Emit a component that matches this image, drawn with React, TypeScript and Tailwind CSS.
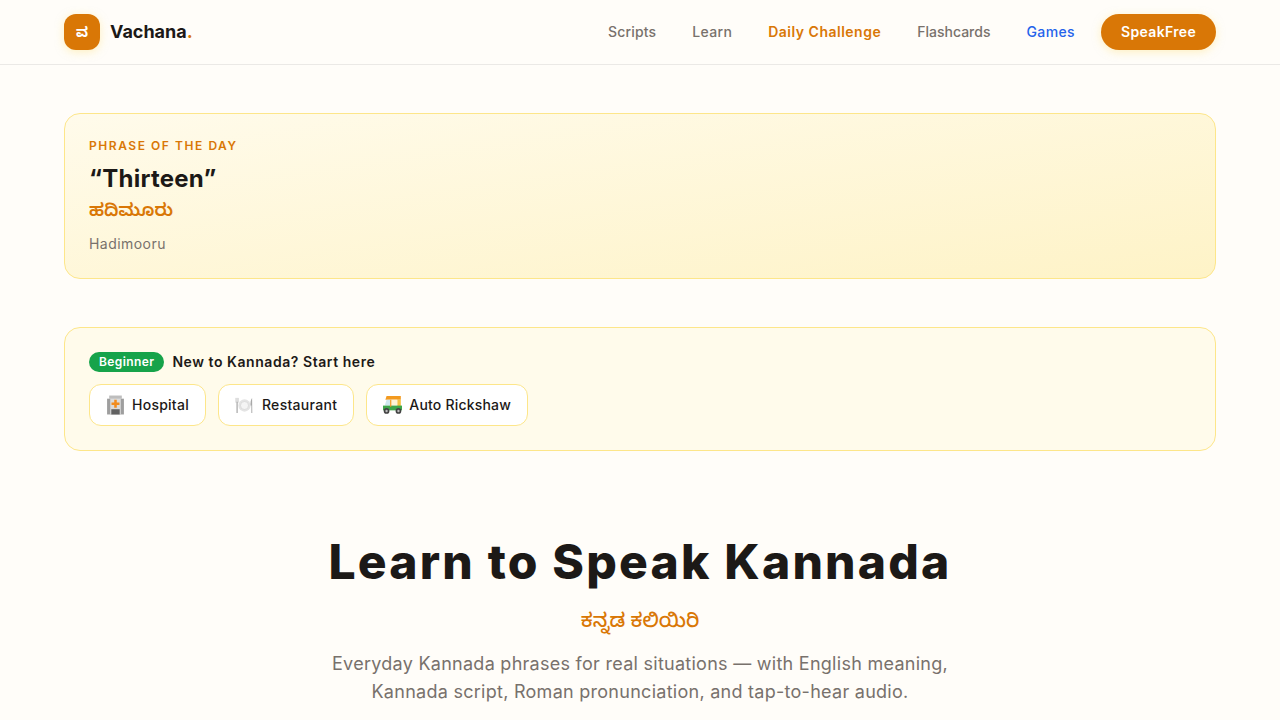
const font = { fontFamily: 'Inter, "Noto Sans Kannada", "Noto Sans", sans-serif' };

const links = [
  { label: "Scripts", cls: "text-[#78716c] font-medium tracking-[0.15px]" },
  { label: "Learn", cls: "text-[#78716c] font-medium tracking-[0.35px]" },
  { label: "Daily Challenge", cls: "text-[#d97706] font-semibold tracking-[0.5px]" },
  { label: "Flashcards", cls: "text-[#78716c] font-medium" },
  { label: "Games", cls: "text-[#2563eb] font-medium tracking-[0.4px]" },
];

const Hospital = () => (
  <svg viewBox="1.5 0.5 17 19" className="w-[19px] h-[20px]">
    <rect x="4" y="1" width="12" height="3" fill="#bdbdbd" />
    <rect x="2" y="4" width="16" height="15" fill="#9e9e9e" />
    <rect x="5" y="4" width="10" height="15" fill="#dcdcdc" />
    <path d="M8.8 5h2.4v2.6h2.6V10h-2.6v2.6H8.8V10H6.2V7.6h2.6z" fill="#f28c1e" />
    <rect x="6" y="14" width="8" height="5" fill="#616161" />
  </svg>
);

const Plate = () => (
  <svg viewBox="0 0 20 20" className="w-[19px] h-[19px]">
    <circle cx="10" cy="10" r="6.5" fill="#e4e4e4" />
    <circle cx="10" cy="10" r="4.2" fill="#f4f4f4" stroke="#cfcfcf" strokeWidth="0.6" />
    <path d="M1 2v5M2.2 2v5M3.4 2v5" stroke="#bdbdbd" strokeWidth="0.7" />
    <path d="M2.2 6v12" stroke="#a8a8a8" strokeWidth="1.3" />
    <path d="M18 2c-1.6 1.5-1.8 5-1.6 8h.8v8h1z" fill="#a8a8a8" />
  </svg>
);

const Rickshaw = () => (
  <svg viewBox="2 2.5 16 16" className="w-[19px] h-[20px]">
    <path d="M5 3h12v3H4z" fill="#f39a1f" />
    <path d="M5 6h3v5H3.5z" fill="#cfe8ef" />
    <rect x="14" y="6" width="3" height="6" fill="#f5c242" />
    <path d="M8 6h6v5H8z" fill="#fff3d6" />
    <path d="M2 11h16v4H2z" fill="#3ea64a" />
    <rect x="8" y="6" width="1" height="6" fill="#f39a1f" />
    <circle cx="5" cy="15.5" r="2.4" fill="#424242" />
    <circle cx="15" cy="15.5" r="2.4" fill="#424242" />
    <circle cx="5" cy="15.5" r="1" fill="#bdbdbd" />
    <circle cx="15" cy="15.5" r="1" fill="#bdbdbd" />
  </svg>
);

const topics = [
  { icon: <Hospital />, label: "Hospital", cls: "tracking-[0.25px] gap-[7px]" },
  { icon: <Plate />, label: "Restaurant", cls: "tracking-[0.3px] gap-2" },
  { icon: <Rickshaw />, label: "Auto Rickshaw", cls: "tracking-[0.2px] gap-[7px]" },
];

export default function App() {
  return (
    <div className="bg-[#fffdf9] text-[#1c1917] overflow-hidden h-[720px]" style={font}>
      <nav className="h-[65px] border-b border-[#ebe9e6] px-16 flex items-center justify-between">
        <div className="flex items-center gap-2.5">
          <div className="w-9 h-9 rounded-xl bg-[#d97706] text-white text-sm font-bold flex items-center justify-center shadow-[0_2px_8px_rgba(253,230,138,0.5)]">ವ</div>
          <span className="text-lg font-bold">Vachana<span className="text-[#d97706]">.</span></span>
        </div>
        <div className="flex items-center gap-9">
          {links.map((l) => (
            <a key={l.label} className={`text-sm ${l.cls}`}>{l.label}</a>
          ))}
          <button className="-ml-2.5 h-9 px-5 rounded-full bg-[#d97706] text-white text-sm font-semibold tracking-[0.33px] shadow-[0_2px_8px_rgba(253,230,138,0.5)]">SpeakFree</button>
        </div>
      </nav>

      <main className="px-16 pt-12">
        <section className="h-[166px] rounded-2xl border border-[#fde68a] bg-gradient-to-br from-[#fffbeb] to-[#fef3c7] px-6 pt-6">
          <p className="text-xs font-semibold tracking-[1.55px] text-[#d97706] uppercase leading-4">Phrase of the day</p>
          <h2 className="mt-[9px] text-2xl font-bold leading-8 tracking-[0.25px]">“Thirteen”</h2>
          <p className="mt-px text-lg font-semibold text-[#d97706] leading-7">ಹದಿಮೂರು</p>
          <p className="mt-2.5 text-sm text-[#78716c] leading-5 tracking-[0.45px]">Hadimooru</p>
        </section>

        <section className="mt-12 h-[124px] rounded-2xl border border-[#fde68a] bg-[#fffbeb] px-6 pt-6">
          <div className="flex items-center gap-2 h-5">
            <span className="rounded-full bg-[#16a34a] text-white text-xs font-semibold px-2.5 h-5 flex items-center tracking-[0.4px]">Beginner</span>
            <span className="text-sm font-semibold tracking-[0.55px]">New to Kannada? Start here</span>
          </div>
          <div className="mt-3 flex gap-3">
            {topics.map((t) => (
              <div key={t.label} className={`h-[42px] px-4 rounded-xl border border-[#fde68a] bg-white flex items-center text-sm font-medium ${t.cls}`}>
                {t.icon}
                {t.label}
              </div>
            ))}
          </div>
        </section>

        <section className="mt-[81px] text-center">
          <h1 className="text-5xl font-extrabold leading-[60px] tracking-[2.2px]">Learn to Speak Kannada</h1>
          <p className="mt-[14px] text-xl text-[#d97706] font-medium leading-7">ಕನ್ನಡ ಕಲಿಯಿರಿ</p>
          <p className="mt-4 text-lg text-[#78716c] leading-7 tracking-[0.27px] max-w-[640px] mx-auto">Everyday Kannada phrases for real situations — with English meaning, Kannada script, Roman pronunciation, and tap-to-hear audio.</p>
        </section>
      </main>
    </div>
  );
}
